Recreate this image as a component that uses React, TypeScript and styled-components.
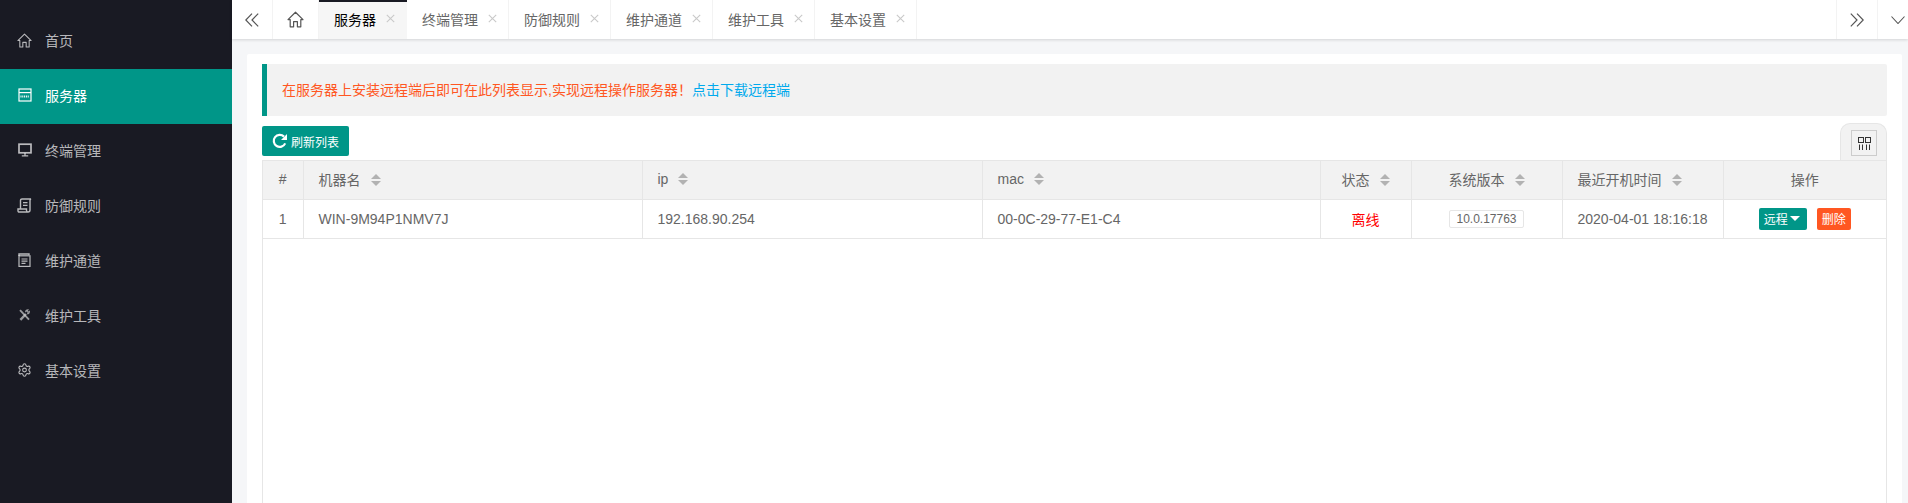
import { ReactNode } from "react";
import styled, { createGlobalStyle } from "styled-components";
import { Settings } from "lucide-react";

const GREEN = "#009688";
const DARK = "#191a23";
const LINE = "#e6e6e6";

const GlobalStyle = createGlobalStyle`
  html, body, #root {
    margin: 0;
    height: 100%;
    overflow: hidden;
  }
  body {
    font-family: "Liberation Sans", "Noto Sans CJK SC", sans-serif;
    font-size: 14px;
    color: #666;
  }
  * {
    box-sizing: border-box;
  }
`;

const IconHome = () => (
  <svg width="17" height="17" viewBox="0 0 17 17" fill="none" stroke="currentColor" strokeWidth="1.2">
    <path d="M8.5 1.2 16 8.6h-2.2v7.2h-3.4v-5.2H6.6v5.2H3.2V8.6H1z" strokeLinejoin="round" />
  </svg>
);

const IconServer = () => (
  <svg width="14" height="14" viewBox="0 0 14 14" fill="none" stroke="currentColor">
    <rect x="1" y="1" width="12" height="12" strokeWidth="1.2" />
    <path d="M1 4.6h12" strokeWidth="1.2" />
    <path d="M2.5 8.6h9" strokeWidth="2" strokeDasharray="1 .8" />
  </svg>
);

const IconMonitor = () => (
  <svg width="14" height="14" viewBox="0 0 14 14" fill="none" stroke="currentColor">
    <rect x="1" y="1.2" width="12" height="8.6" strokeWidth="1.7" />
    <path d="M7 10v2.4M3.8 12.8h6.4" strokeWidth="1.3" />
  </svg>
);

const IconScroll = () => (
  <svg width="15" height="15" viewBox="0 0 15 15" fill="none" stroke="currentColor" strokeWidth="1.4">
    <path d="M3.5 11V2.5C3.5 1.5 4.2 1 5 1h9c-.8.3-1 .9-1 1.6V4M13 3v9c0 1.2-.8 2-2 2H2.2c-.8 0-1.2-.5-1.2-1.2V11h8.5v1.6c0 .8.6 1.4 1.5 1.4" />
    <path d="M6 4.6h4.5M6 7.4h4.5" />
  </svg>
);

const IconDoc = () => (
  <svg width="13" height="14" viewBox="0 0 13 14" fill="none" stroke="currentColor" strokeWidth="1.2">
    <path d="M1 3V1h10v1" strokeWidth="1.4" />
    <rect x="1" y="2.8" width="11" height="10.6" />
    <path d="M3.5 6h6M3.5 8.2h6M3.5 10.4h4" />
  </svg>
);

const IconTools = () => (
  <svg width="11" height="12" viewBox="0 0 11 12" fill="none" stroke="currentColor" opacity="0.8">
    <path d="M1 1.2 10 10.6" strokeWidth="1.9" />
    <path d="M1.4 10.8 7 5" strokeWidth="2.4" />
    <path d="M6.6 3.2C6.6 1.8 7.6.8 9 .8L8 2.3l.9.9 1.5-.8c0 1.4-1 2.4-2.4 2.4" strokeWidth="1.1" />
  </svg>
);

const IconGear = () => <Settings size={16} strokeWidth={1.7} />;

const Chevrons = ({ flip }: { flip?: boolean }) => (
  <svg width="14" height="14" viewBox="0 0 14 14" fill="none" stroke="currentColor" strokeWidth="1.2">
    <g transform={flip ? "matrix(-1 0 0 1 14 0)" : undefined}>
      <path d="M7 .6.8 7 7 13.4M13.2.6 7 7l6.2 6.4" />
    </g>
  </svg>
);

const IconClose = () => (
  <svg width="9" height="9" viewBox="0 0 9 9" stroke="currentColor" strokeWidth="1.1">
    <path d="m.8.8 7.4 7.4M8.2.8.8 8.2" />
  </svg>
);

const IconDown = () => (
  <svg width="14" height="8" viewBox="0 0 14 8" fill="none" stroke="currentColor" strokeWidth="1.1">
    <path d="m.5.5 6.5 7 6.5-7" />
  </svg>
);

const IconRefresh = () => (
  <svg width="16" height="16" viewBox="0 0 16 16" fill="none">
    <path d="M13.2 10.4A6 6 0 1 1 12 3.6" stroke="currentColor" strokeWidth="2.2" />
    <path d="M15 1v6H9z" fill="currentColor" />
  </svg>
);

const IconCols = () => (
  <svg width="13" height="13" viewBox="0 0 13 13" fill="none" stroke="#333" strokeWidth="1">
    <rect x="0.5" y="0.5" width="5" height="5" />
    <rect x="7.5" y="0.5" width="5" height="5" />
    <path d="M1.5 7.5V13M4.5 7.5V13M8.5 7.5V13M11.5 7.5V13" />
  </svg>
);

const menu: { label: string; icon: ReactNode; active?: boolean }[] = [
  { label: "首页", icon: <IconHome /> },
  { label: "服务器", icon: <IconServer />, active: true },
  { label: "终端管理", icon: <IconMonitor /> },
  { label: "防御规则", icon: <IconScroll /> },
  { label: "维护通道", icon: <IconDoc /> },
  { label: "维护工具", icon: <IconTools /> },
  { label: "基本设置", icon: <IconGear /> },
];

const tabs = ["服务器", "终端管理", "防御规则", "维护通道", "维护工具", "基本设置"];

const App = () => (
  <Page>
    <GlobalStyle />
    <Sidebar>
      {menu.map((item) => (
        <MenuItem key={item.label} $active={item.active}>
          <MenuIcon>{item.icon}</MenuIcon>
          {item.label}
        </MenuItem>
      ))}
    </Sidebar>
    <Main>
      <TabBar>
        <TabTool $width={41}>
          <Chevrons />
        </TabTool>
        <TabTool $width={46}>
          <IconHome />
        </TabTool>
        {tabs.map((tab, i) => (
          <Tab key={tab} $active={i === 0}>
            {tab}
            <CloseMark>
              <IconClose />
            </CloseMark>
          </Tab>
        ))}
        <TabSpacer />
        <TabTool $width={41} $left>
          <Chevrons flip />
        </TabTool>
        <TabDown>
          <IconDown />
        </TabDown>
      </TabBar>
      <Content>
        <Panel>
          <Quote>
            在服务器上安装远程端后即可在此列表显示,实现远程操作服务器！
            <QuoteLink>点击下载远程端</QuoteLink>
          </Quote>
          <Toolbar>
            <RefreshButton>
              <IconRefresh />
              刷新列表
            </RefreshButton>
            <ToolTab>
              <ColsButton>
                <IconCols />
              </ColsButton>
            </ToolTab>
          </Toolbar>
          <TableBox>
            <Table>
              <colgroup>
                <col width={40} />
                <col width={339} />
                <col width={340} />
                <col width={338} />
                <col width={91} />
                <col width={151} />
                <col width={161} />
                <col />
              </colgroup>
              <thead>
                <tr>
                  <Th $center>#</Th>
                  <Th>
                    机器名<Sort />
                  </Th>
                  <Th>
                    ip<Sort />
                  </Th>
                  <Th>
                    mac<Sort />
                  </Th>
                  <Th $center>
                    状态<Sort />
                  </Th>
                  <Th $center>
                    系统版本<Sort />
                  </Th>
                  <Th>
                    最近开机时间<Sort />
                  </Th>
                  <Th $center>操作</Th>
                </tr>
              </thead>
              <tbody>
                <tr>
                  <Td $center>1</Td>
                  <Td>WIN-9M94P1NMV7J</Td>
                  <Td>192.168.90.254</Td>
                  <Td>00-0C-29-77-E1-C4</Td>
                  <Td $center>
                    <Offline>离线</Offline>
                  </Td>
                  <Td $center>
                    <VersionBadge>10.0.17763</VersionBadge>
                  </Td>
                  <Td>2020-04-01 18:16:18</Td>
                  <Td $center>
                    <Actions>
                      <SmallButton $color={GREEN}>
                        远程
                        <CaretDown />
                      </SmallButton>
                      <SmallButton $color="#ff5722">删除</SmallButton>
                    </Actions>
                  </Td>
                </tr>
              </tbody>
            </Table>
          </TableBox>
        </Panel>
      </Content>
    </Main>
  </Page>
);

const Page = styled.div`
  display: flex;
  height: 100vh;
  background: #f5f6f8;
`;

const Sidebar = styled.aside`
  flex: 0 0 232px;
  padding-top: 14px;
  background: ${DARK};
`;

const MenuItem = styled.div<{ $active?: boolean }>`
  display: flex;
  align-items: center;
  height: 55px;
  padding: 0 0 3px 17px;
  font-size: 14px;
  color: ${(p) => (p.$active ? "#fff" : "rgba(255, 255, 255, 0.7)")};
  background: ${(p) => (p.$active ? GREEN : "transparent")};
`;

const MenuIcon = styled.span`
  display: flex;
  justify-content: center;
  align-items: center;
  width: 15px;
  margin-right: 13px;
`;

const Main = styled.main`
  flex: 1;
  min-width: 0;
  display: flex;
  flex-direction: column;
`;

const TabBar = styled.div`
  flex: 0 0 39px;
  display: flex;
  background: #fff;
  box-shadow: 0 1px 3px rgba(0, 0, 0, 0.14);
`;

const TabTool = styled.div<{ $width: number; $left?: boolean }>`
  flex: 0 0 ${(p) => p.$width}px;
  display: flex;
  align-items: center;
  justify-content: center;
  color: #555;
  border-${(p) => (p.$left ? "left" : "right")}: 1px solid #f3f3f3;
`;

const TabSpacer = styled.div`
  flex: 1;
`;

const TabDown = styled.div`
  flex: 0 0 31px;
  display: flex;
  align-items: center;
  padding-left: 13px;
  color: #555;
  border-left: 1px solid #f3f3f3;
`;

const Tab = styled.div<{ $active?: boolean }>`
  display: flex;
  align-items: center;
  padding: 0 ${(p) => (p.$active ? 12 : 11)}px 2px 15px;
  font-size: 14px;
  color: ${(p) => (p.$active ? "#000" : "#666")};
  background: ${(p) => (p.$active ? "#f6f6f6" : "#fff")};
  border-right: ${(p) => (p.$active ? "none" : "1px solid #f3f3f3")};
  box-shadow: ${(p) => (p.$active ? `inset 0 2px 0 ${DARK}` : "none")};
`;

const CloseMark = styled.span`
  display: flex;
  margin-left: 10px;
  color: #c9c9c9;
`;

const Content = styled.div`
  flex: 1;
  min-height: 0;
  display: flex;
  padding: 15px 6px 0 15px;
`;

const Panel = styled.section`
  flex: 1;
  display: flex;
  flex-direction: column;
  padding: 10px 15px 0;
  background: #fff;
  border-radius: 2px 2px 0 0;
`;

const Quote = styled.div`
  padding: 15px;
  line-height: 22px;
  color: #ff5722;
  background: #f2f2f2;
  border-left: 5px solid ${GREEN};
  border-radius: 0 2px 2px 0;
`;

const QuoteLink = styled.a`
  color: #01aaed;
`;

const Toolbar = styled.div`
  display: flex;
  justify-content: space-between;
  align-items: flex-start;
  height: 37px;
  margin-top: 7px;
`;

const RefreshButton = styled.button`
  display: flex;
  align-items: center;
  gap: 3px;
  height: 30px;
  margin-top: 3px;
  padding: 0 10px;
  border: none;
  border-radius: 2px;
  font: inherit;
  font-size: 12px;
  color: #fff;
  background: ${GREEN};
`;

const ToolTab = styled.div`
  width: 47px;
  height: 37px;
  padding: 6px 0 0 10px;
  background: #f2f2f2;
  border: 1px solid ${LINE};
  border-bottom: none;
  border-radius: 10px 10px 0 0;
`;

const ColsButton = styled.div`
  display: flex;
  align-items: center;
  justify-content: center;
  width: 26px;
  height: 26px;
  border: 1px solid #ccc;
`;

const TableBox = styled.div`
  flex: 1;
  border: 1px solid ${LINE};
  border-bottom: none;
`;

const Table = styled.table`
  width: 100%;
  table-layout: fixed;
  border-collapse: collapse;
`;

const Th = styled.th<{ $center?: boolean }>`
  height: 38px;
  padding: 0 15px 1px;
  font-weight: 400;
  text-align: ${(p) => (p.$center ? "center" : "left")};
  white-space: nowrap;
  color: #666;
  background: #f2f2f2;
  border-right: 1px solid ${LINE};
  border-bottom: 1px solid ${LINE};
  &:last-child {
    border-right: none;
  }
`;

const Td = styled.td<{ $center?: boolean }>`
  height: 39px;
  padding: 0 15px;
  text-align: ${(p) => (p.$center ? "center" : "left")};
  white-space: nowrap;
  color: #666;
  border-right: 1px solid ${LINE};
  border-bottom: 1px solid ${LINE};
  &:last-child {
    border-right: none;
    padding: 0;
  }
`;

const Sort = styled.span`
  display: inline-block;
  position: relative;
  width: 10px;
  height: 12px;
  margin-left: 10px;
  vertical-align: -1px;
  &::before,
  &::after {
    content: "";
    position: absolute;
    left: 0;
    border-left: 5px solid transparent;
    border-right: 5px solid transparent;
  }
  &::before {
    top: 0;
    border-bottom: 5px solid #b2b2b2;
  }
  &::after {
    bottom: 0;
    border-top: 5px solid #b2b2b2;
  }
`;

const Offline = styled.span`
  color: #f00;
`;

const VersionBadge = styled.span`
  display: inline-block;
  height: 18px;
  padding: 0 6px;
  font-size: 12px;
  line-height: 16px;
  color: #666;
  background: #fff;
  border: 1px solid ${LINE};
  border-radius: 2px;
`;

const Actions = styled.div`
  display: flex;
  justify-content: center;
  gap: 10px;
`;

const SmallButton = styled.button<{ $color: string }>`
  display: flex;
  align-items: center;
  height: 22px;
  padding: 0 5px;
  border: none;
  border-radius: 2px;
  font: inherit;
  font-size: 12px;
  color: #fff;
  background: ${(p) => p.$color};
`;

const CaretDown = styled.span`
  margin: 0 2px;
  border-left: 5px solid transparent;
  border-right: 5px solid transparent;
  border-top: 5px solid #fff;
`;

export default App;
